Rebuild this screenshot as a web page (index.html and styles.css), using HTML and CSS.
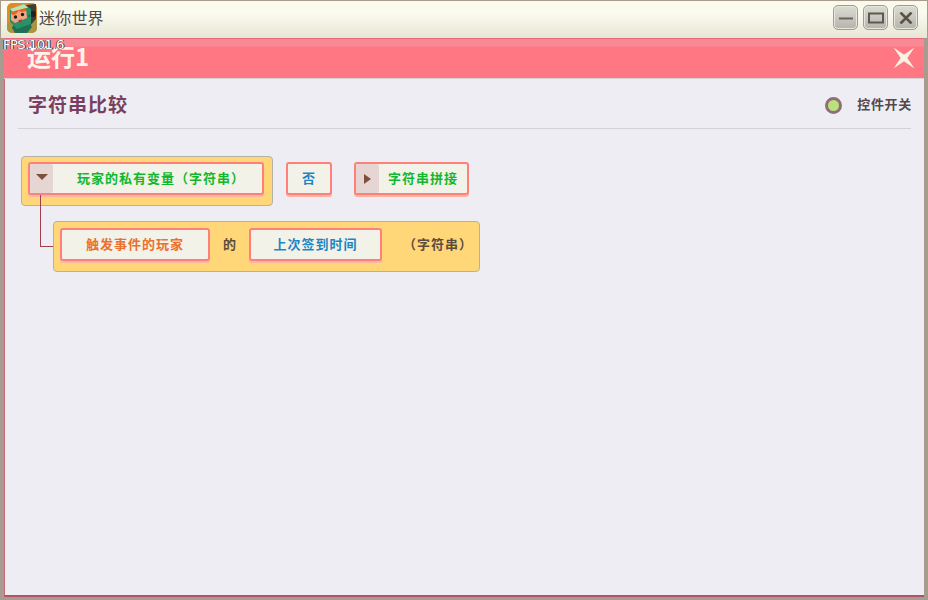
FILE: index.html
```html
<!DOCTYPE html>
<html lang="zh">
<head>
<meta charset="utf-8">
<title>迷你世界</title>
<link rel="stylesheet" href="styles.css">
</head>
<body>
<div class="window">
  <header class="titlebar">
    <svg class="app-icon" width="30" height="30" viewBox="0 0 30 30">
      <rect width="30" height="30" rx="5" fill="#e08a28"/>
      <path d="M0 20 L30 17 V25 a5 5 0 0 1-5 5 H5 a5 5 0 0 1-5-5z" fill="#a8953f"/>
      <path d="M19 2 L29 1 V16 L22 24 Z" fill="#39403c"/>
      <circle cx="26" cy="11" r="3" fill="#1e2422"/>
      <path d="M7 20 L21 18 L25 24 L20 30 H8 L5 25 Z" fill="#1f6f55"/>
      <path d="M3 6 L17 1 L24 6 V21 L10 26 L3 19 Z" fill="#2b8f68"/>
      <path d="M3 6 L17 1 L21 4.5 L6 9.5 Z" fill="#bfe0b0"/>
      <path d="M4 9 L19 5 L20 15 L8 20 L4 17 Z" fill="#f2a583"/>
      <path d="M4 9 L19 5 L19 8 L14 9 L12 7.5 L9 11 L5 12 Z" fill="#e8641e"/>
      <circle cx="8.5" cy="14" r="1.7" fill="#1e1e1e"/>
      <circle cx="15.5" cy="11.5" r="1.7" fill="#1e1e1e"/>
      <path d="M10.5 18 L15 16 L14 19.5 Z" fill="#b92e2a"/>
      <rect x="21" y="12" width="2" height="2" fill="#1f6f55"/>
    </svg>
    <span class="app-name">迷你世界</span>
    <div class="win-controls">
      <button class="win-btn" type="button" aria-label="最小化">
        <svg width="16" height="12" viewBox="0 0 16 12"><path d="M1 6.5H15" stroke="#6a6258" stroke-width="2"/></svg>
      </button>
      <button class="win-btn" type="button" aria-label="最大化">
        <svg width="16" height="12" viewBox="0 0 16 12"><rect x="1" y="1.5" width="14" height="9" fill="none" stroke="#5f5850" stroke-width="2"/></svg>
      </button>
      <button class="win-btn" type="button" aria-label="关闭">
        <svg width="16" height="12" viewBox="0 0 16 12"><path d="M2.5 .5L13.5 11.5M13.5 .5L2.5 11.5" stroke="#5a5248" stroke-width="2.6"/></svg>
      </button>
    </div>
  </header>

  <main class="panel">
    <div class="panel-head">
      <h1 class="panel-title">运行1</h1>
      <svg class="panel-close" width="22" height="22" viewBox="0 0 22 22">
        <path d="M1.5 1.5 L11 8 L20.5 1.5 L14 11 L20.5 20.5 L11 14 L1.5 20.5 L8 11 Z" fill="#f8f4e4" stroke="#f8f4e4" stroke-width="0.6" stroke-linejoin="round"/>
      </svg>
    </div>
    <div class="panel-body">
      <div class="section-head">
        <h2 class="section-title">字符串比较</h2>
        <div class="toggle">
          <span class="toggle-dot"></span>
          <span class="toggle-label">控件开关</span>
        </div>
      </div>
      <div class="script">
        <div class="row">
          <div class="group group-main">
            <div class="chip chip-main">
              <span class="handle"><span class="arrow-down"></span></span>
              <span class="chip-text chip-text-long green">玩家的私有变量（字符串）</span>
            </div>
          </div>
          <div class="chip chip-no"><span class="chip-text blue">否</span></div>
          <div class="chip chip-concat">
            <span class="handle"><span class="arrow-right"></span></span>
            <span class="chip-text green">字符串拼接</span>
          </div>
        </div>
        <div class="group group-sub">
          <div class="chip chip-player"><span class="chip-text orange">触发事件的玩家</span></div>
          <span class="word word-of">的</span>
          <div class="chip chip-var"><span class="chip-text blue">上次签到时间</span></div>
          <span class="word word-type">（字符串）</span>
        </div>
        <span class="connector"></span>
      </div>
    </div>
  </main>
  <div class="fps">FPS:101.6</div>
</div>
</body>
</html>
```
FILE: styles.css
```css
* { box-sizing: border-box; }
html, body { margin: 0; height: 100%; }
body {
  width: 928px;
  height: 600px;
  overflow: hidden;
  font-family: "Noto Sans CJK SC", "Liberation Sans", sans-serif;
}
.window {
  position: relative;
  width: 928px;
  height: 600px;
  display: flex;
  flex-direction: column;
  background: #a79c8f;
  padding: 1px 3px 3px 3px;
}
.titlebar {
  flex: none;
  height: 37px;
  margin: 0 -2px;
  padding: 2px 8px 0 6px;
  display: flex;
  align-items: flex-start;
  background: linear-gradient(#fafae9 0%, #fbfbf0 30%, #e7e6d6 100%);
}
.app-icon { flex: none; }
.app-name {
  margin: 3px 0 0 2px;
  font-size: 16px;
  line-height: 22px;
  letter-spacing: 0.2px;
  color: #4c4a46;
}
.win-controls {
  margin-left: auto;
  display: flex;
  gap: 5px;
  margin-top: 2px;
  margin-right: 1px;
}
.win-btn {
  width: 25px;
  height: 25px;
  padding: 0;
  display: flex;
  align-items: center;
  justify-content: center;
  border: 1px solid #a8998a;
  border-radius: 5px;
  background: linear-gradient(#dcdcd4, #b4b4ac);
  box-shadow: inset 0 0 0 1px #e6e6de;
}
.panel {
  flex: 1;
  display: flex;
  flex-direction: column;
  min-height: 0;
  margin: 0 1px 0 1px;
  background: #eeedf3;
}
.panel-head {
  flex: none;
  height: 41px;
  padding: 0 9px 0 23px;
  display: flex;
  align-items: flex-start;
  justify-content: space-between;
  background: linear-gradient(#e86a78 0, #e86a78 1px, #f78a94 1px, #f78a94 8px, #ff7783 9px, #ff7783 40px, #d8d2d6 40px);
}
.panel-title {
  margin: 3px 0 0 0;
  font-size: 24px;
  line-height: 30px;
  font-weight: 700;
  color: #fff4ea;
}
.panel-close { display: block; margin-top: 9px; }
.panel-body {
  position: relative;
  flex: 1;
  min-height: 0;
  padding: 0 13px;
  border-left: 1px solid #c76a78;
  border-bottom: 2px solid #b65067;
}
.section-head {
  height: 50px;
  padding: 0 0 0 10px;
  display: flex;
  align-items: center;
  justify-content: space-between;
  border-bottom: 1px solid #d4d2d8;
}
.section-title {
  margin: 0;
  font-size: 19px;
  line-height: 26px;
  font-weight: 700;
  letter-spacing: 1px;
  color: #7a3f5e;
}
.toggle { display: flex; align-items: center; gap: 15px; margin-right: -1px; }
.toggle-dot {
  width: 17px;
  height: 17px;
  border-radius: 50%;
  background: #b9e27a;
  border: 3px solid #8f6f72;
  margin-top: 4px;
}
.toggle-label {
  font-size: 13px;
  line-height: 18px;
  font-weight: 700;
  letter-spacing: 0.7px;
  color: #54494a;
}
.script {
  position: relative;
  padding: 27px 0 0 3px;
  display: flex;
  flex-direction: column;
  gap: 15px;
}
.row { display: flex; align-items: flex-start; }
.group {
  background: #ffd778;
  border: 1px solid #b5b0a8;
  border-radius: 4px;
}
.group-main { width: 252px; height: 50px; padding: 5px 8px 0 6px; }
.group-sub {
  width: 427px;
  height: 51px;
  margin-left: 32px;
  padding: 6px 0 0 6px;
  display: flex;
  align-items: flex-start;
}
.chip {
  height: 33px;
  display: flex;
  align-items: stretch;
  background: #f3f2e9;
  border: 2px solid #ff8078;
  border-radius: 3px;
  box-shadow: 0 2px 0 #ffb4a6;
}
.chip-main { width: 236px; }
.chip-no { width: 46px; margin-left: 13px; margin-top: 6px; justify-content: center; }
.chip-concat { width: 115px; margin-left: 22px; margin-top: 6px; }
.chip-player { width: 150px; justify-content: center; }
.chip-var { width: 133px; justify-content: center; }
.handle {
  flex: none;
  width: 23px;
  display: flex;
  align-items: center;
  justify-content: center;
  background: #e5d6d4;
  border-radius: 2px;
}
.arrow-down {
  width: 0; height: 0;
  margin-top: -3px;
  border: 6px solid transparent;
  border-bottom: 0;
  border-top: 6px solid #7d4f3c;
}
.arrow-right {
  width: 0; height: 0;
  border: 5.5px solid transparent;
  border-right: 0;
  border-left: 7px solid #7d4f3c;
}
.chip-text {
  flex: 1;
  text-align: center;
  font-size: 13px;
  line-height: 27px;
  font-weight: 700;
  letter-spacing: 1px;
  white-space: nowrap;
}
.chip-text-long { padding-left: 7px; }
.green { color: #12b82c; }
.blue { color: #1d86c4; }
.orange { color: #e9702e; }
.word {
  font-size: 13px;
  line-height: 31px;
  font-weight: 700;
  letter-spacing: 1px;
  color: #5d4c3c;
  white-space: nowrap;
}
.word-of { margin: 0 12px 0 13px; }
.word-type { margin-left: 21px; }
.connector {
  position: absolute;
  left: 22px;
  top: 66px;
  width: 13px;
  height: 52px;
  border-left: 1px solid #a0404f;
  border-bottom: 1px solid #a0404f;
}
.fps {
  position: absolute;
  left: 3px;
  top: 37px;
  font-family: "DejaVu Sans", sans-serif;
  font-size: 13px;
  line-height: 16px;
  letter-spacing: -0.5px;
  color: #fff;
  text-shadow: 1px 0 0 #444, -1px 0 0 #444;
}
```
